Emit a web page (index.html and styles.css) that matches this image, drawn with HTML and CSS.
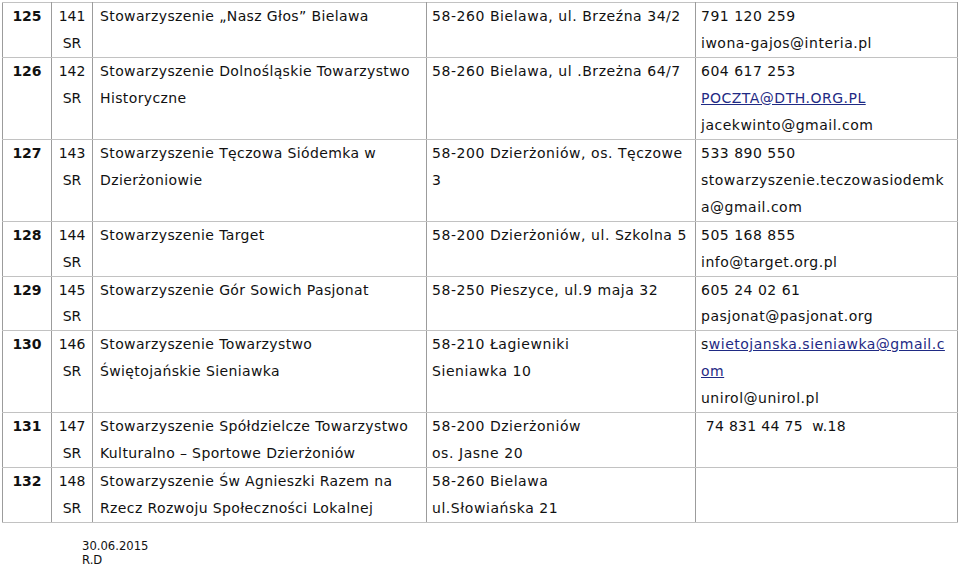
FILE: index.html
```html
<!DOCTYPE html>
<html lang="pl">
<head>
<meta charset="utf-8">
<title>Stowarzyszenia</title>
<link rel="stylesheet" href="styles.css">
</head>
<body>
<div class="page">
<table class="list">
<colgroup>
<col class="c-lp"><col class="c-nr"><col class="c-name"><col class="c-addr"><col class="c-contact">
</colgroup>
<tbody>
<tr>
<td class="lp">125</td>
<td class="nr">141<br>SR</td>
<td class="name">Stowarzyszenie „Nasz Głos” Bielawa</td>
<td class="addr">58-260 Bielawa, ul. Brzeźna 34/2</td>
<td class="contact"><div>791 120 259</div><div>iwona-gajos@interia.pl</div></td>
</tr>
<tr>
<td class="lp">126</td>
<td class="nr">142<br>SR</td>
<td class="name">Stowarzyszenie Dolnośląskie Towarzystwo<br>Historyczne</td>
<td class="addr">58-260 Bielawa, ul .Brzeżna 64/7</td>
<td class="contact"><div>604 617 253</div><div><a class="link" href="#">POCZTA@DTH.ORG.PL</a></div><div>jacekwinto@gmail.com</div></td>
</tr>
<tr>
<td class="lp">127</td>
<td class="nr">143<br>SR</td>
<td class="name">Stowarzyszenie Tęczowa Siódemka w<br>Dzierżoniowie</td>
<td class="addr">58-200 Dzierżoniów, os. Tęczowe<br>3</td>
<td class="contact"><div>533 890 550</div><div>stowarzyszenie.teczowasiodemk</div><div>a@gmail.com</div></td>
</tr>
<tr>
<td class="lp">128</td>
<td class="nr">144<br>SR</td>
<td class="name">Stowarzyszenie Target</td>
<td class="addr">58-200 Dzierżoniów, ul. Szkolna 5</td>
<td class="contact"><div>505 168 855</div><div>info@target.org.pl</div></td>
</tr>
<tr>
<td class="lp">129</td>
<td class="nr">145<br>SR</td>
<td class="name">Stowarzyszenie Gór Sowich Pasjonat</td>
<td class="addr">58-250 Pieszyce, ul.9 maja 32</td>
<td class="contact"><div>605 24 02 61</div><div>pasjonat@pasjonat.org</div></td>
</tr>
<tr>
<td class="lp">130</td>
<td class="nr">146<br>SR</td>
<td class="name">Stowarzyszenie Towarzystwo<br>Świętojańskie Sieniawka</td>
<td class="addr">58-210 Łagiewniki<br>Sieniawka 10</td>
<td class="contact"><div>s<a class="link" href="#">wietojanska.sieniawka@gmail.c</a></div><div><a class="link" href="#">om</a></div><div>unirol@unirol.pl</div></td>
</tr>
<tr>
<td class="lp">131</td>
<td class="nr">147<br>SR</td>
<td class="name">Stowarzyszenie Spółdzielcze Towarzystwo<br>Kulturalno – Sportowe Dzierżoniów</td>
<td class="addr">58-200 Dzierżoniów<br>os. Jasne 20</td>
<td class="contact"><div class="pre"> 74 831 44 75  w.18</div></td>
</tr>
<tr>
<td class="lp">132</td>
<td class="nr">148<br>SR</td>
<td class="name">Stowarzyszenie Św Agnieszki Razem na<br>Rzecz Rozwoju Społeczności Lokalnej</td>
<td class="addr">58-260 Bielawa<br>ul.Słowiańska 21</td>
<td class="contact"></td>
</tr>
</tbody>
</table>
<div class="footer">30.06.2015<br>R.D</div>
</div>
</body>
</html>
```

FILE: styles.css
```css
html, body {
  margin: 0;
  padding: 0;
  background: #ffffff;
}
body {
  font-family: "DejaVu Sans", Verdana, sans-serif;
  color: #111111;
}
.page {
  padding: 2px 0 0 2px;
}
.list {
  border-collapse: collapse;
  table-layout: fixed;
  width: 955px;
  font-size: 14px;
  line-height: 26.95px;
}
.c-lp { width: 49px; }
.c-nr { width: 41px; }
.c-name { width: 334px; }
.c-addr { width: 269px; }
.c-contact { width: 262px; }
.list td {
  vertical-align: top;
  padding: 0;
  border-top: 1px solid #c2c2c2;
  border-bottom: 1px solid #c2c2c2;
  border-left: 1px solid #9c9c9c;
  border-right: 1px solid #9c9c9c;
  white-space: nowrap;
  overflow: hidden;
}
.lp {
  text-align: center;
  font-weight: bold;
}
.nr {
  text-align: center;
}
.name {
  padding-left: 7px !important;
  letter-spacing: 0.38px;
}
.addr {
  padding-left: 5px !important;
  letter-spacing: 0.55px;
}
.contact {
  padding-left: 5px !important;
  letter-spacing: 0.5px;
}
.link {
  color: #1f2a84;
  text-decoration: underline;
}
.pre {
  white-space: pre;
  letter-spacing: 0.3px;
}
.footer {
  margin: 16px 0 0 80px;
  font-size: 11.6px;
  line-height: 14px;
  color: #111111;
}
```
